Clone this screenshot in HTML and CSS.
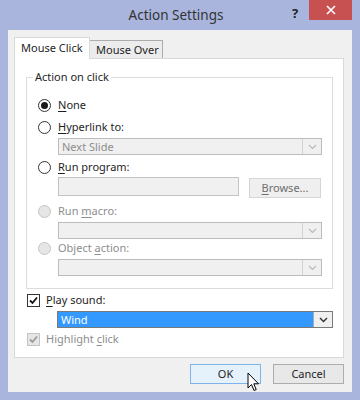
FILE: index.html
```html
<!DOCTYPE html>
<html lang="en">
<head>
    <meta charset="UTF-8">
    <meta name="viewport" content="width=device-width, initial-scale=1.0">
    <title>Action Settings</title>
    <link rel="stylesheet" href="styles.css">
</head>
<body>
    <div class="window">
        <div class="titlebar">
            <div></div>
            <div class="title">Action Settings</div>
            <div class="controls">
                <span class="help">?</span>
                <span class="close">
                    <svg width="10" height="10" viewBox="0 0 10 10">
                        <path d="M1 1 L9 9 M9 1 L1 9" stroke="#fff" stroke-width="1.6"/>
                    </svg>
                </span>
            </div>
        </div>

        <div class="client">
            <div class="tabs">
                <div class="tab active">Mouse Click</div>
                <div class="tab">Mouse Over</div>
            </div>

            <div class="panel">
                <fieldset class="group">
                    <legend>Action on click</legend>

                    <div class="option">
                        <span class="radio checked"></span>
                        <span><u>N</u>one</span>
                    </div>

                    <div class="option gap">
                        <span class="radio"></span>
                        <span><u>H</u>yperlink to:</span>
                    </div>
                    <div class="combo disabled indent">
                        <span class="value">Next Slide</span>
                        <span class="arrow">
                            <svg width="9" height="6" viewBox="0 0 9 6"><path d="M1 1 L4.5 4.5 L8 1" fill="none" stroke="#b9b9b9" stroke-width="1.2"/></svg>
                        </span>
                    </div>

                    <div class="option gap-sm">
                        <span class="radio"></span>
                        <span><u>R</u>un program:</span>
                    </div>
                    <div class="program indent">
                        <div class="textbox"></div>
                        <div class="btn browse"><u>B</u>rowse...</div>
                    </div>

                    <div class="option gap disabled">
                        <span class="radio"></span>
                        <span>Run <u>m</u>acro:</span>
                    </div>
                    <div class="combo disabled indent">
                        <span class="value"></span>
                        <span class="arrow">
                            <svg width="9" height="6" viewBox="0 0 9 6"><path d="M1 1 L4.5 4.5 L8 1" fill="none" stroke="#b9b9b9" stroke-width="1.2"/></svg>
                        </span>
                    </div>

                    <div class="option disabled">
                        <span class="radio"></span>
                        <span>Object <u>a</u>ction:</span>
                    </div>
                    <div class="combo disabled indent">
                        <span class="value"></span>
                        <span class="arrow">
                            <svg width="9" height="6" viewBox="0 0 9 6"><path d="M1 1 L4.5 4.5 L8 1" fill="none" stroke="#b9b9b9" stroke-width="1.2"/></svg>
                        </span>
                    </div>
                </fieldset>

                <div class="check-row">
                    <span class="checkbox">
                        <svg width="11" height="11" viewBox="0 0 11 11"><path d="M2 5.5 L4.5 8 L9 2.5" fill="none" stroke="#111" stroke-width="1.8"/></svg>
                    </span>
                    <span><u>P</u>lay sound:</span>
                </div>
                <div class="combo sound">
                    <span class="value">Wind</span>
                    <span class="arrow">
                        <svg width="9" height="6" viewBox="0 0 9 6"><path d="M1 1 L4.5 4.5 L8 1" fill="none" stroke="#333" stroke-width="1.4"/></svg>
                    </span>
                </div>
                <div class="check-row disabled">
                    <span class="checkbox">
                        <svg width="11" height="11" viewBox="0 0 11 11"><path d="M2 5.5 L4.5 8 L9 2.5" fill="none" stroke="#9a9a9a" stroke-width="1.8"/></svg>
                    </span>
                    <span>Highlight <u>c</u>lick</span>
                </div>
            </div>

            <div class="buttons">
                <div class="btn default">OK</div>
                <div class="btn">Cancel</div>
                <svg class="cursor" width="13" height="20" viewBox="0 0 13 20">
                    <path d="M1 1 L1 16 L4.5 12.5 L7 18.5 L9.2 17.6 L6.8 11.8 L11.5 11.8 Z" fill="#fff" stroke="#000" stroke-width="1" stroke-linejoin="round"/>
                </svg>
            </div>
        </div>
    </div>
</body>
</html>
```

FILE: styles.css
```css
* {
    padding: 0;
    margin: 0;
    box-sizing: border-box;
}

body {
    background-color: #aab5de;
    font-family: 'Noto Sans', 'Open Sans', sans-serif;
    font-size: 11px;
    line-height: 16px;
    color: #1e1e1e;
    width: 360px;
    height: 400px;
    overflow: hidden;
}

u {
    text-decoration: underline;
    text-underline-offset: 2px;
}

.window {
    padding: 0 8px 8px 8px;
}

.titlebar {
    height: 30px;
    display: grid;
    grid-template-columns: 1fr auto 1fr;
    margin: 0 -8px;
    padding-right: 8px;
}

.title {
    font-size: 13.5px;
    color: #333;
    align-self: center;
    line-height: 20px;
}

.controls {
    display: flex;
    justify-content: flex-end;
    align-items: flex-start;
}

.help {
    width: 28px;
    text-align: center;
    font-weight: bold;
    font-size: 13px;
    color: #222;
    margin-top: 5px;
}

.close {
    width: 43px;
    height: 20px;
    background-color: #c75050;
    display: flex;
    justify-content: center;
    align-items: center;
}

.client {
    background-color: #f0f0f0;
    height: 362px;
    padding: 7px 8px 0 6px;
    position: relative;
}

/* tabs */
.tabs {
    display: flex;
    align-items: flex-end;
    height: 21px;
}

.tab {
    height: 18px;
    width: 74px;
    padding-left: 6px;
    line-height: 17px;
    white-space: nowrap;
    border: 1px solid #acacac;
    border-bottom: none;
    background-color: #ececec;
    margin-left: -1px;
}

.tab.active {
    height: 22px;
    width: 76px;
    margin-left: 0;
    margin-bottom: -1px;
    line-height: 20px;
    border-color: #d9d9d9;
    background-color: #ffffff;
    position: relative;
    z-index: 1;
}

.panel {
    height: 300px;
    background-color: #ffffff;
    border: 1px solid #d9d9d9;
    padding: 10px 10px 0 11px;
}

/* group box */
.group {
    border: 1px solid #dcdcdc;
    padding: 11px 10px 12px 11px;
}

.group legend {
    padding: 0 2px;
    margin-left: -5px;
}

.option, .check-row {
    display: flex;
    align-items: center;
    height: 18px;
    gap: 7px;
}

.option.gap {
    margin-top: 4px;
}

.option.gap-sm {
    margin-top: 3px;
}

.disabled {
    color: #8d8d8d;
}

.radio {
    width: 13px;
    height: 13px;
    border-radius: 50%;
    border: 1px solid #333;
    background-color: #fff;
    display: flex;
    justify-content: center;
    align-items: center;
}

.radio.checked::after {
    content: "";
    width: 7px;
    height: 7px;
    border-radius: 50%;
    background-color: #1a1a1a;
}

.option.disabled .radio {
    border-color: #c4c4c4;
    background-color: #e6e6e6;
}

.indent {
    margin-left: 20px;
}

.combo {
    display: flex;
    height: 17px;
    border: 1px solid #bcbcbc;
    background-color: #f0f0f0;
    margin-top: 2px;
}

.combo .value {
    flex: 1;
    padding-left: 3px;
    line-height: 15px;
}

.combo .arrow {
    width: 19px;
    border-left: 1px solid #d2d2d2;
    display: flex;
    justify-content: center;
    align-items: center;
}

.program {
    display: flex;
    gap: 10px;
    margin-top: 1px;
    height: 21px;
}

.textbox {
    width: 181px;
    height: 19px;
    border: 1px solid #c3c3c3;
    background-color: #f0f0f0;
}

.btn {
    height: 20px;
    width: 71px;
    border: 1px solid #adadad;
    background-color: #e8e8e8;
    text-align: center;
    line-height: 18px;
}

.btn.browse {
    width: 72px;
    margin-top: 1px;
    color: #6e6e6e;
    border-color: #d5d5d5;
    background-color: #efefef;
}

/* below the group */
.check-row {
    margin-top: 2px;
    padding-left: 1px;
    gap: 6px;
}

.checkbox {
    width: 13px;
    height: 13px;
    border: 1px solid #333;
    background-color: #fff;
    display: flex;
    justify-content: center;
    align-items: center;
}

.check-row.disabled .checkbox {
    border-color: #c4c4c4;
    background-color: #e6e6e6;
}

.combo.sound {
    margin: 2px 0 1px 31px;
    border-color: #7a7a7a;
    background-color: #3399ff;
    color: #ffffff;
}

.combo.sound .value {
    margin: 1px 0 1px 1px;
    padding-left: 2px;
    line-height: 13px;
}

.combo.sound .arrow {
    background-color: #f0f0f0;
    border-left-color: #acacac;
}

/* dialog buttons */
.buttons {
    display: flex;
    justify-content: flex-end;
    gap: 12px;
    margin-top: 6px;
    position: relative;
}

.btn.default {
    border-color: #7eb4ea;
    background-color: #e5f1fb;
}

.cursor {
    position: absolute;
    left: 233px;
    top: 8px;
}
```
